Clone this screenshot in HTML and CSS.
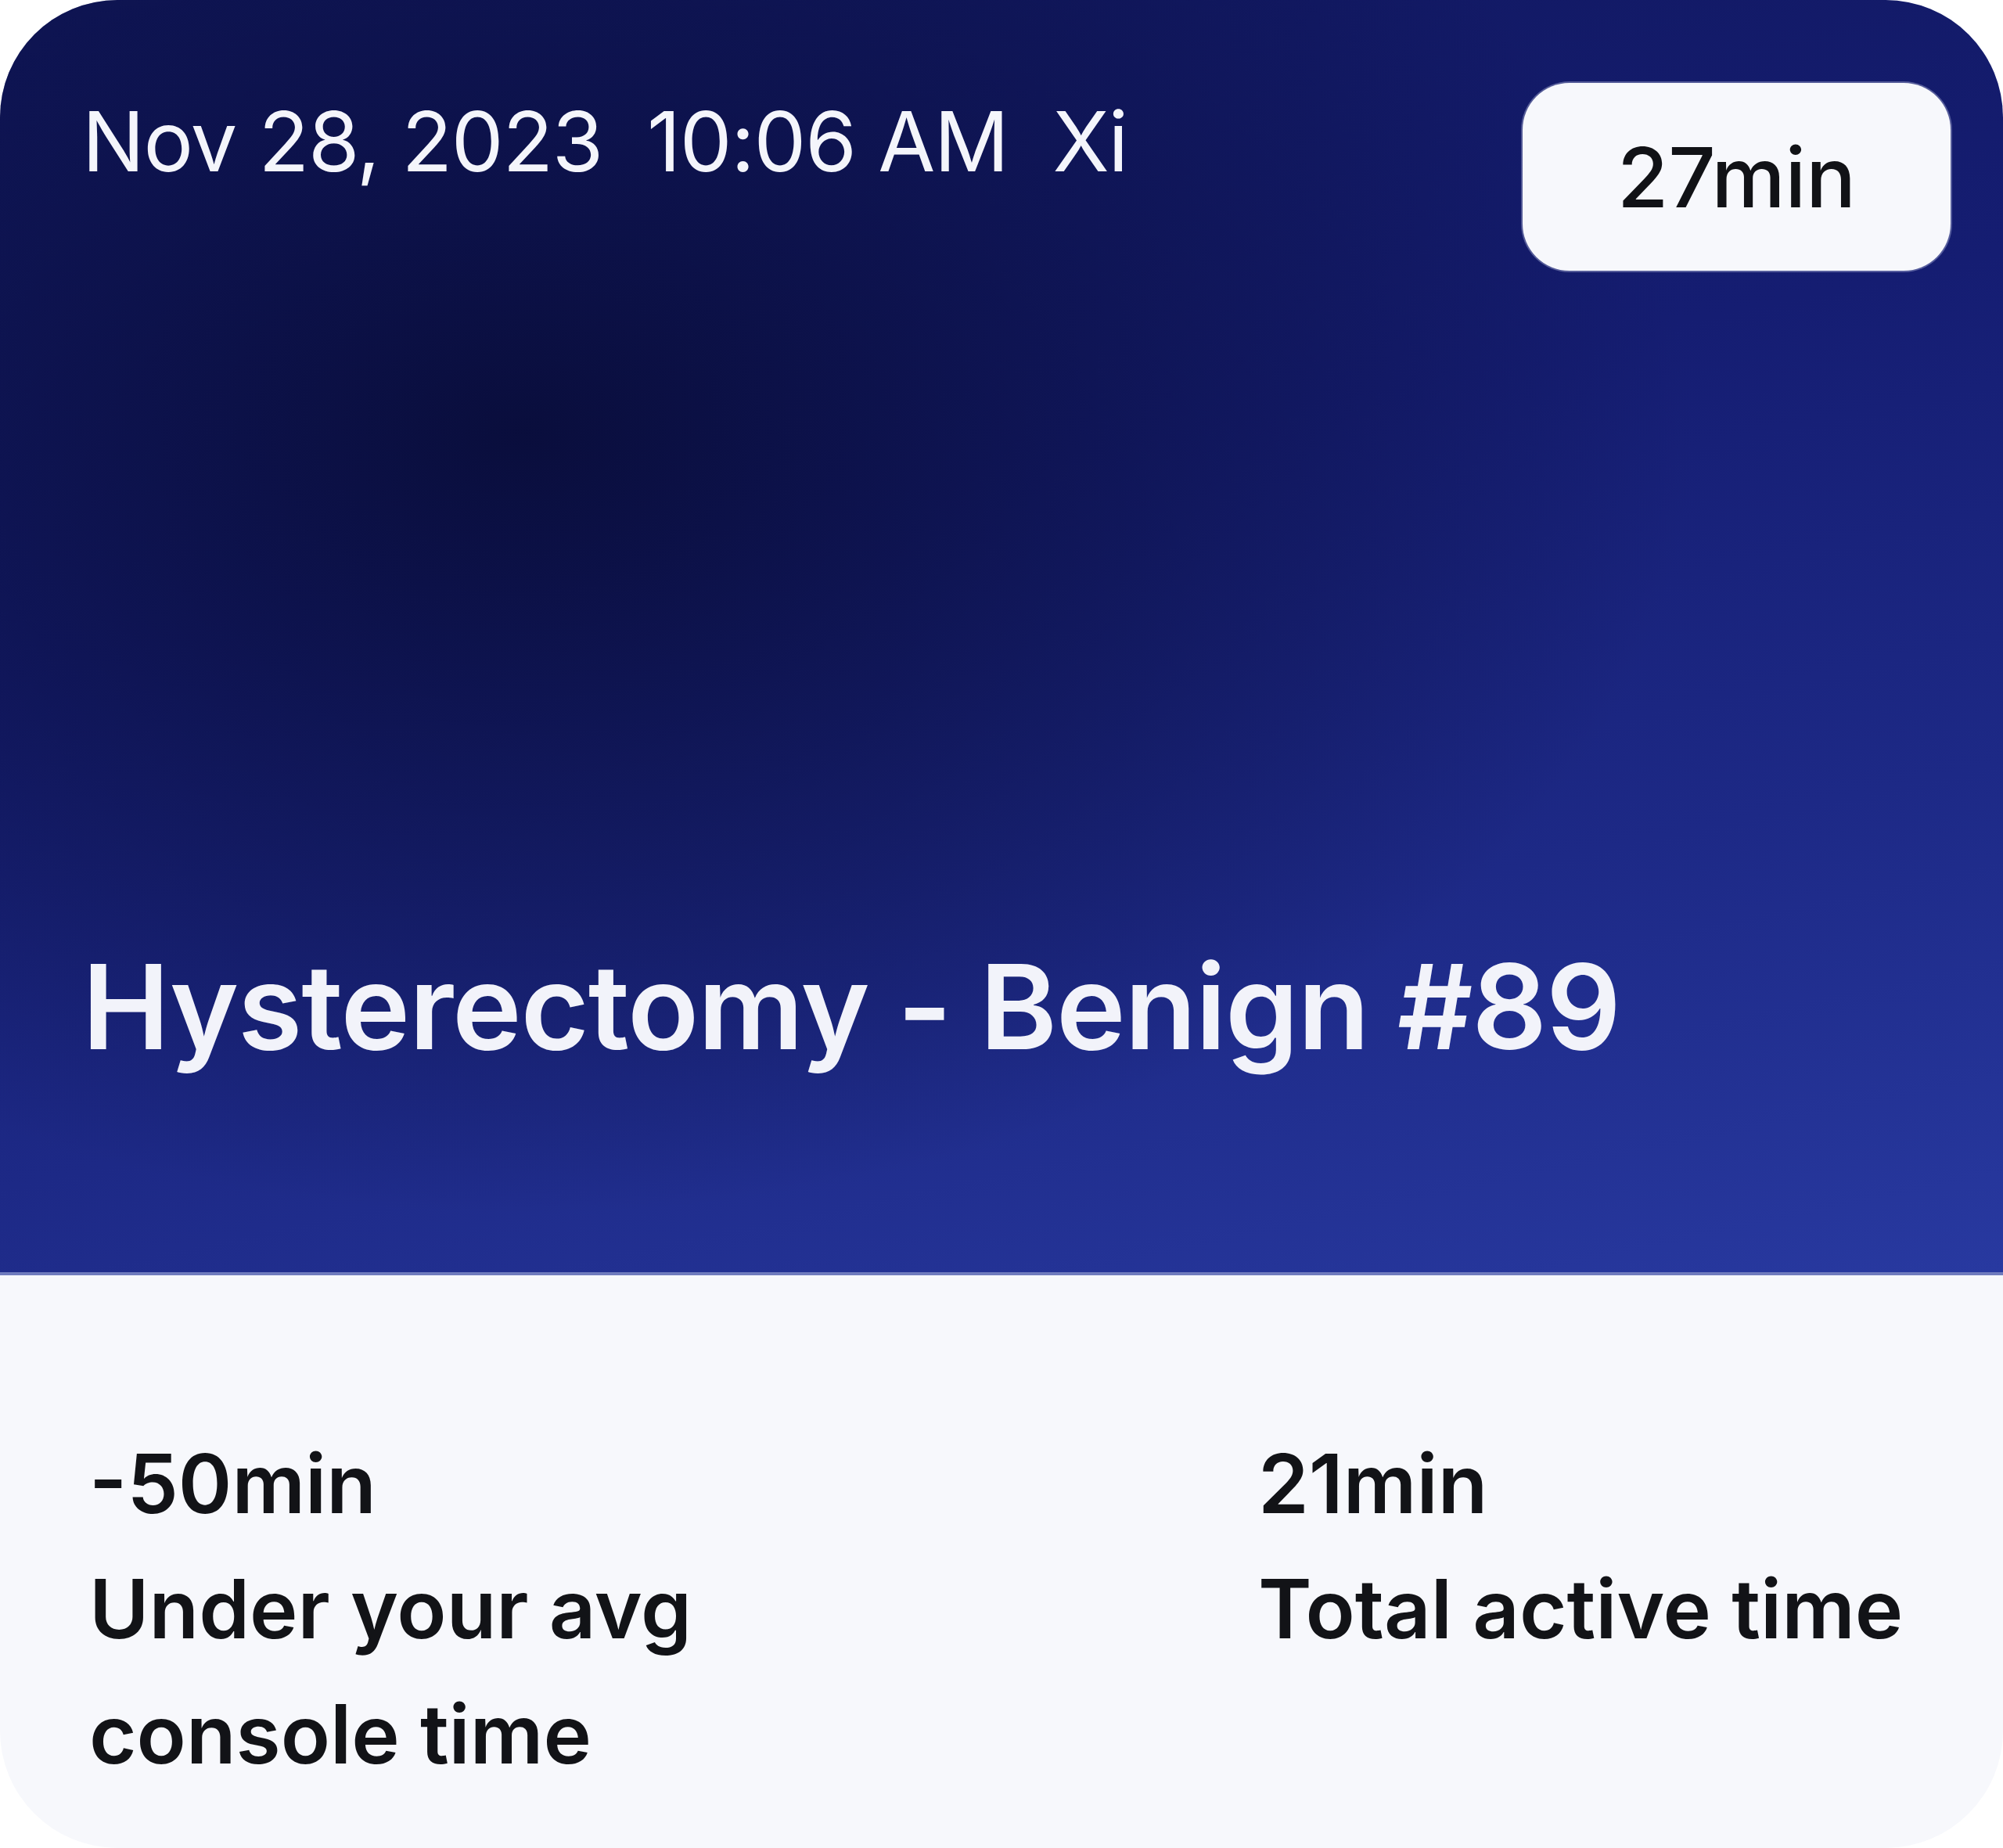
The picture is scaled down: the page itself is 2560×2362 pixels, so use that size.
FILE: index.html
```html
<!doctype html>
<html>
<head>
<meta http-equiv="Content-Type" content="text/html; charset=utf-8">
<title>Case summary</title>
<link rel="stylesheet" href="styles.css">
</head>
<body>
<div class="card">
	<div class="card-top">
		<div class="card-head">
			<p class="case-date">Nov 28, 2023&nbsp;&nbsp;10:06 AM&nbsp;&nbsp;Xi</p>
			<span class="case-badge">27min</span>
		</div>
		<h1 class="case-title">Hysterectomy - Benign #89</h1>
	</div>
	<div class="card-stats">
		<div class="stat">
			<p class="stat-value">-50min</p>
			<p class="stat-label">Under your avg console time</p>
		</div>
		<div class="stat">
			<p class="stat-value">21min</p>
			<p class="stat-label">Total active time</p>
		</div>
	</div>
</div>
</body>
</html>
```

FILE: styles.css
```css
html,body{
	margin:0;
	padding:0;
	background:#ffffff;
}
body{
	font-family:Inter,"Noto Sans",sans-serif;
}
p,h1{
	margin:0;
}
.card{
	width:2560px;
	height:2362px;
	border-radius:150px;
	overflow:hidden;
	display:flex;
	flex-direction:column;
	background:#f7f8fc;
}
.card-top{
	height:1630px;
	box-sizing:border-box;
	padding:106px 67px 264px 105px;
	display:flex;
	flex-direction:column;
	border-bottom:4px solid #6f7bbd;
	background:
		radial-gradient(ellipse 1500px 1000px at 26% 34%, rgba(9,13,58,0.95) 0%, rgba(9,13,58,0) 100%),
		linear-gradient(168deg, #10175c 0%, #151d72 40%, #1d2986 70%, #2839a0 100%);
}
.card-head{
	display:flex;
	justify-content:space-between;
	align-items:flex-start;
}
.case-date{
	margin-top:22px;
	font-size:106px;
	line-height:1;
	font-weight:400;
	letter-spacing:-1.3px;
	color:#f4f5fb;
}
.case-badge{
	width:547px;
	height:240px;
	border-radius:60px;
	background:#f7f8fc;
	color:#111216;
	font-size:106px;
	font-weight:500;
	display:flex;
	align-items:center;
	justify-content:center;
	box-shadow:0 0 0 2px rgba(210,214,240,0.35);
}
.case-title{
	margin-top:auto;
	font-size:150px;
	line-height:1;
	font-weight:600;
	letter-spacing:-1.2px;
	color:#f2f3fa;
}
.card-stats{
	flex:1;
	display:grid;
	grid-template-columns:1494px auto;
	padding:186px 0 0 114px;
	align-content:start;
}
.stat-value,.stat-label{
	font-size:104px;
	line-height:160px;
	font-weight:600;
	color:#121317;
}
.stat-label{
	max-width:900px;
}
```
